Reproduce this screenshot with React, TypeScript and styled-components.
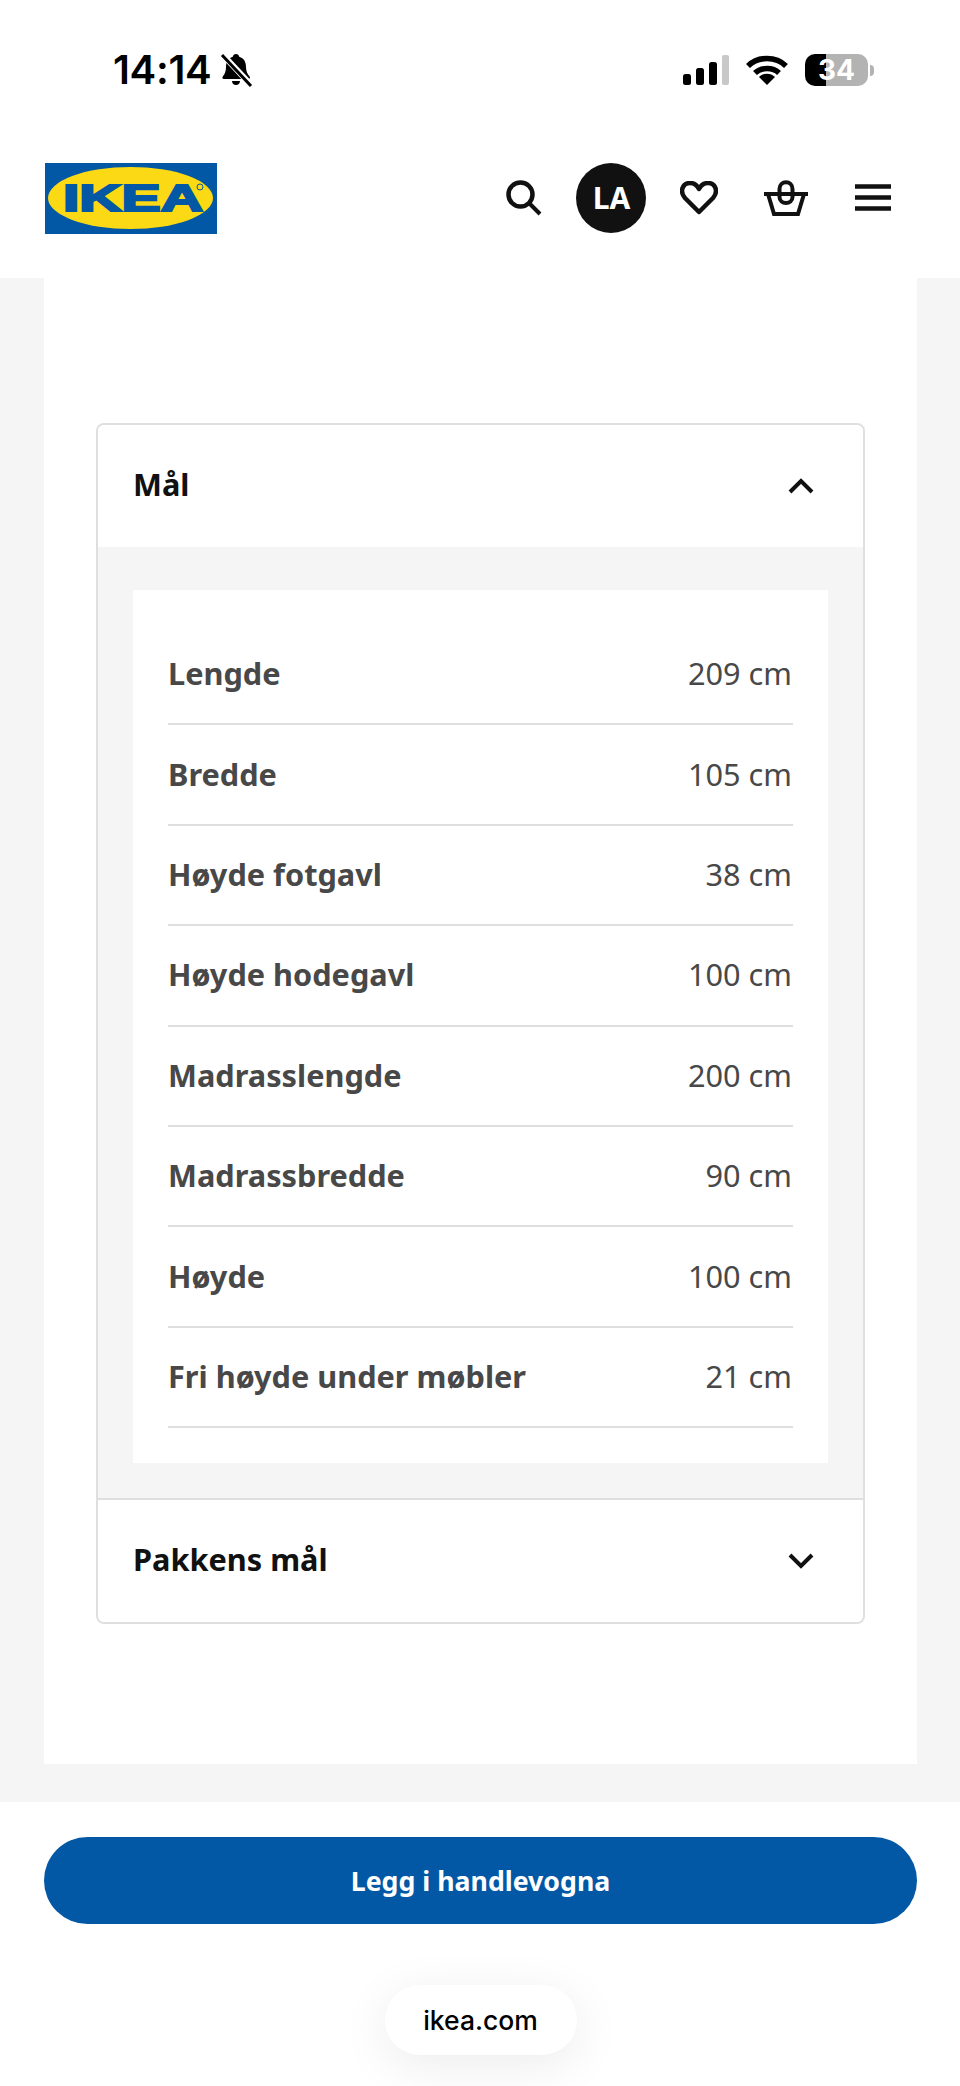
import React from "react";
import styled, { createGlobalStyle } from "styled-components";

const Global = createGlobalStyle`
  html, body { margin: 0; padding: 0; background: #fff; }
  body { font-family: "Noto Sans", "Open Sans", sans-serif; }
`;

const Page = styled.div`
  width: 960px;
  height: 2086px;
  display: flex;
  flex-direction: column;
  background: #fff;
  overflow: hidden;
`;

const StatusBar = styled.div`
  height: 140px;
  box-sizing: border-box;
  padding: 52px 86px 0 113px;
  display: flex;
  justify-content: space-between;
  align-items: flex-start;
`;

const StatusLeft = styled.div`
  display: flex;
  align-items: center;
  gap: 8px;
  height: 36px;
`;

const Clock = styled.span`
  font-family: "Inter", "Liberation Sans", sans-serif;
  font-size: 40px;
  line-height: 36px;
  font-weight: 600;
  color: #000;
  letter-spacing: -0.3px;
`;

const StatusRight = styled.div`
  display: flex;
  align-items: center;
  gap: 17px;
  height: 36px;
`;

const Battery = styled.div`
  position: relative;
  width: 63px;
  height: 32px;
  border-radius: 10px;
  overflow: hidden;
  background: linear-gradient(90deg, #000 0 34%, #b3b3b3 34% 100%);
  display: flex;
  align-items: center;
  justify-content: center;
`;

const BatteryText = styled.span`
  font-family: "Inter", "Liberation Sans", sans-serif;
  font-size: 28px;
  font-weight: 700;
  color: #fff;
  line-height: 1;
`;

const BatteryWrap = styled.div`
  display: flex;
  align-items: center;
  gap: 2px;
`;

const BatteryCap = styled.div`
  width: 4px;
  height: 11px;
  background: #b3b3b3;
  border-radius: 0 4px 4px 0;
`;

const Header = styled.header`
  height: 138px;
  box-sizing: border-box;
  padding: 23px 43px 0 45px;
  display: flex;
  justify-content: space-between;
  align-items: flex-start;
`;

const Nav = styled.nav`
  display: flex;
  align-items: center;
  height: 70px;
`;

const NavButton = styled.div`
  width: 87.3px;
  height: 70px;
  display: flex;
  align-items: center;
  justify-content: center;
`;

const Avatar = styled.div`
  width: 70px;
  height: 70px;
  border-radius: 50%;
  background: #111;
  color: #fff;
  font-family: "Noto Sans", sans-serif;
  font-weight: 700;
  font-size: 30px;
  line-height: 70px;
  text-align: center;
`;

const Main = styled.main`
  height: 1524px;
  box-sizing: border-box;
  background: #f5f5f5;
  padding: 0 43px 38px 44px;
  display: flex;
  flex-direction: column;
`;

const Card = styled.section`
  flex: 1;
  background: #fff;
  padding: 145px 52px 0 52px;
`;

const Accordion = styled.div`
  border: 2px solid #dfdfdf;
  border-radius: 8px;
  overflow: hidden;
  box-sizing: border-box;
  display: flex;
  flex-direction: column;
`;

const AccordionHeader = styled.div`
  height: 122px;
  flex: none;
  box-sizing: border-box;
  padding: 0 49px 0 35px;
  display: flex;
  align-items: center;
  justify-content: space-between;
  background: #fff;
`;

const AccordionTitle = styled.span`
  font-size: 30.7px;
  font-weight: 700;
  color: #111;
  margin-bottom: 4px;
`;

const AccordionBody = styled.div`
  background: #f5f5f5;
  padding: 43px 35px 35px;
  border-bottom: 2px solid #dfdfdf;
  flex: none;
`;

const Spec = styled.div`
  background: #fff;
  height: 873px;
  box-sizing: border-box;
  padding: 35px 35px 0;
`;

const SpecRow = styled.div`
  height: 100.4px;
  box-sizing: border-box;
  border-bottom: 2px solid #dfdfdf;
  display: flex;
  justify-content: space-between;
  align-items: center;
  padding: 0 1px 2px 0;
`;

const SpecName = styled.span`
  font-size: 30.7px;
  font-weight: 700;
  color: #484848;
`;

const SpecValue = styled.span`
  font-size: 30.7px;
  font-weight: 400;
  color: #484848;
`;

const Footer = styled.footer`
  flex: 1;
  background: #fff;
  padding: 35px 43px 0 44px;
  display: flex;
  flex-direction: column;
  align-items: center;
`;

const CartButton = styled.div`
  width: 100%;
  height: 87px;
  border-radius: 44px;
  background: #0358a5;
  color: #fff;
  font-size: 26.7px;
  font-weight: 700;
  display: flex;
  align-items: center;
  justify-content: center;
`;

const UrlPill = styled.div`
  margin-top: 61px;
  width: 192px;
  height: 70px;
  border-radius: 35px;
  background: #fff;
  box-shadow: 0 10px 50px rgba(0, 0, 0, 0.08);
  font-family: "Inter", "Liberation Sans", sans-serif;
  font-size: 26.5px;
  font-weight: 500;
  color: #000;
  display: flex;
  align-items: center;
  justify-content: center;
`;

const rows: [string, string][] = [
  ["Lengde", "209 cm"],
  ["Bredde", "105 cm"],
  ["Høyde fotgavl", "38 cm"],
  ["Høyde hodegavl", "100 cm"],
  ["Madrasslengde", "200 cm"],
  ["Madrassbredde", "90 cm"],
  ["Høyde", "100 cm"],
  ["Fri høyde under møbler", "21 cm"],
];

const Chevron = ({ up }: { up?: boolean }) => (
  <svg width="26" height="16" viewBox="0 0 26 16" fill="none">
    <path d={up ? "M2 14 L13 3 L24 14" : "M2 2 L13 13 L24 2"} stroke="#111" strokeWidth="4" />
  </svg>
);

export default function App() {
  return (
    <Page>
      <Global />
      <StatusBar>
        <StatusLeft>
          <Clock>14:14</Clock>
          <svg width="34" height="34" viewBox="0 0 34 34">
            <path d="M17 1c1.8 0 3 1.2 3.2 2.8C25 5.2 27 9 27 14c0 4 1.2 7 3.6 9.5.8 1 .3 2.5-1.2 2.5H5c-1.6 0-2.1-1.5-1.2-2.5C6 21 7 18 7 14c0-5 2-8.8 6.8-10.2C14 2.2 15.2 1 17 1zM13 28h8c0 2.5-1.8 4-4 4s-4-1.5-4-4z" fill="#000" />
            <path d="M3 1 L33 33" stroke="#fff" strokeWidth="6" />
            <path d="M3 2 L32 33" stroke="#000" strokeWidth="3" />
          </svg>
        </StatusLeft>
        <StatusRight>
          <svg width="47" height="30" viewBox="0 0 47 30">
            <rect x="1" y="19" width="8" height="11" rx="2.5" fill="#000" />
            <rect x="14" y="13" width="8" height="17" rx="2.5" fill="#000" />
            <rect x="27" y="7" width="8" height="23" rx="2.5" fill="#000" />
            <rect x="40" y="0" width="7" height="30" rx="2" fill="#c8c8c8" />
          </svg>
          <svg width="42" height="30" viewBox="0 0 42 30" fill="none">
            <path d="M2 11 C12 1 30 1 40 11" stroke="#000" strokeWidth="5.5" />
            <path d="M9 18 C15 12 27 12 33 18" stroke="#000" strokeWidth="5.5" />
            <path d="M13 22 C17 17.5 25 17.5 29 22 L21 30 Z" fill="#000" />
          </svg>
          <BatteryWrap>
            <Battery>
              <BatteryText>34</BatteryText>
            </Battery>
            <BatteryCap />
          </BatteryWrap>
        </StatusRight>
      </StatusBar>
      <Header>
        <svg width="172" height="71" viewBox="0 0 172 71">
          <rect width="172" height="71" fill="#0358a5" />
          <ellipse cx="85.5" cy="35" rx="82.5" ry="31" fill="#fbd914" />
          <text x="88" y="48" textAnchor="middle" fontFamily="Liberation Sans, sans-serif" fontWeight="700" fontSize="36" fill="#0358a5" stroke="#0358a5" strokeWidth="2" textLength="140" lengthAdjust="spacingAndGlyphs">IKEA</text>
          <circle cx="155" cy="24" r="3" fill="none" stroke="#0358a5" strokeWidth="1" />
        </svg>
        <Nav>
          <NavButton>
            <svg width="36" height="36" viewBox="0 0 36 36" fill="none">
              <circle cx="14.5" cy="14.5" r="12" stroke="#111" strokeWidth="4.5" />
              <path d="M23 23 L34 34" stroke="#111" strokeWidth="4" />
            </svg>
          </NavButton>
          <NavButton>
            <Avatar>LA</Avatar>
          </NavButton>
          <NavButton>
            <svg width="38" height="34" viewBox="0 0 38 34" fill="none">
              <path d="M19 31 L5 17 C-1 10 3 2 10 2 C14 2 17 4 19 8 C21 4 24 2 28 2 C35 2 39 10 33 17 Z" stroke="#111" strokeWidth="4.5" strokeLinejoin="round" />
            </svg>
          </NavButton>
          <NavButton>
            <svg width="46" height="36" viewBox="0 0 46 36" fill="none">
              <path d="M1 14 H45 M5 14 L11 34 H35 L41 14" stroke="#111" strokeWidth="4" />
              <path d="M16.5 14 V9 C16.500 0 29.5 0 29.5 9 V17 C29.5 25 16.5 25 16.5 17 Z" stroke="#111" strokeWidth="4" />
            </svg>
          </NavButton>
          <NavButton>
            <svg width="36" height="28" viewBox="0 0 36 28">
              <path d="M0 2.5 H36 M0 13.5 H36 M0 24.5 H36" stroke="#111" strokeWidth="4.5" />
            </svg>
          </NavButton>
        </Nav>
      </Header>
      <Main>
        <Card>
          <Accordion>
            <AccordionHeader>
              <AccordionTitle>Mål</AccordionTitle>
              <Chevron up />
            </AccordionHeader>
            <AccordionBody>
              <Spec>
                {rows.map(([name, value]) => (
                  <SpecRow key={name}>
                    <SpecName>{name}</SpecName>
                    <SpecValue>{value}</SpecValue>
                  </SpecRow>
                ))}
              </Spec>
            </AccordionBody>
            <AccordionHeader>
              <AccordionTitle>Pakkens mål</AccordionTitle>
              <Chevron />
            </AccordionHeader>
          </Accordion>
        </Card>
      </Main>
      <Footer>
        <CartButton>Legg i handlevogna</CartButton>
        <UrlPill>ikea.com</UrlPill>
      </Footer>
    </Page>
  );
}
